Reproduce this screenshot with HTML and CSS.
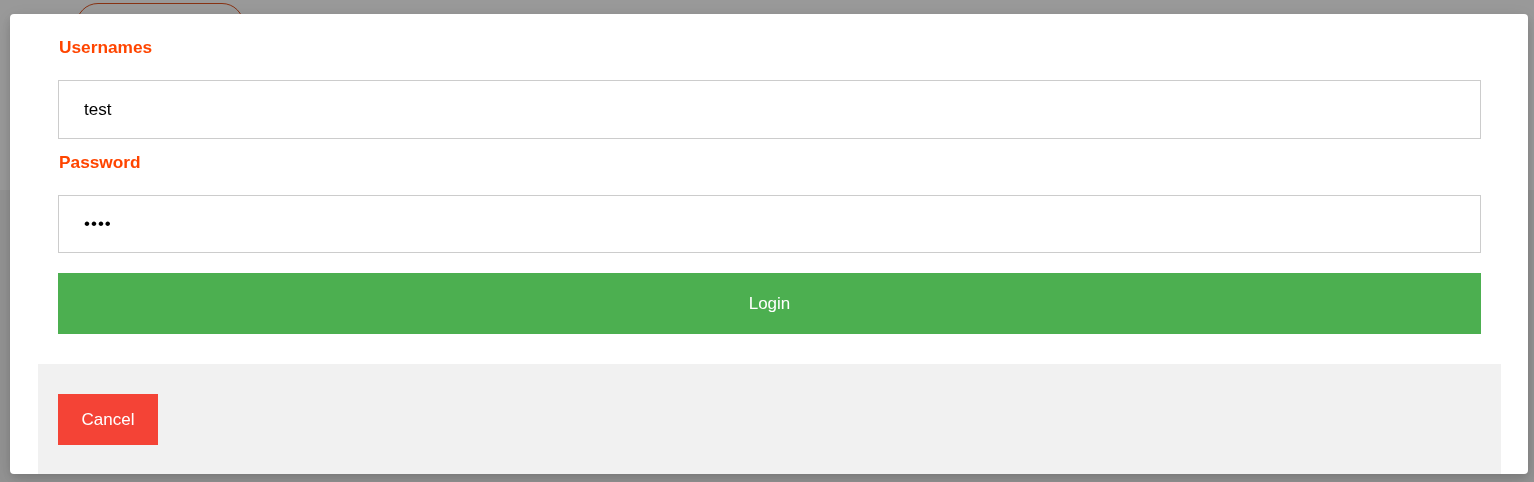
FILE: index.html
```html
<!DOCTYPE html>
<html lang="en">
<head>
<meta charset="utf-8">
<title>Login</title>
<link rel="stylesheet" href="styles.css">
</head>
<body>
<div class="page">
  <div class="page-header">
    <button class="pill-btn" type="button">Login</button>
  </div>
  <div class="page-body"></div>
</div>
<div class="overlay">
  <div class="modal">
    <form class="modal-form">
      <label class="field-label" for="uname">Usernames</label>
      <input class="field-input field-input--first" id="uname" type="text" value="test">
      <label class="field-label field-label--second" for="psw">Password</label>
      <input class="field-input field-input--second" id="psw" type="password" value="test">
      <button class="login-btn" type="button">Login</button>
    </form>
    <div class="modal-footer">
      <button class="cancel-btn" type="button">Cancel</button>
    </div>
  </div>
</div>
</body>
</html>
```
FILE: styles.css
```css
html, body {
  margin: 0;
  padding: 0;
  height: 100%;
  font-family: "Liberation Sans", Arial, sans-serif;
  font-size: 17px;
}

.page {
  height: 100%;
  display: flex;
  flex-direction: column;
}

.page-header {
  height: 190px;
  background: #ffffff;
  padding: 3px 0 0 76px;
  box-sizing: border-box;
}

.pill-btn {
  width: 168px;
  height: 44px;
  border: 1px solid #e25420;
  border-radius: 30px;
  background: #ffffff;
  color: #e25420;
  font-family: inherit;
  font-size: 17px;
}

.page-body {
  flex: 1;
  background: #f4f4f4;
}

.overlay {
  position: fixed;
  inset: 0;
  background: rgba(0, 0, 0, 0.4);
  padding-top: 14px;
  box-sizing: border-box;
}

.modal {
  margin-left: 10px;
  width: 1518px;
  background: #ffffff;
  border-radius: 4px;
  box-shadow: 0 4px 10px 0 rgba(0, 0, 0, 0.12), 0 4px 20px 0 rgba(0, 0, 0, 0.1);
  overflow: hidden;
}

.modal-form {
  display: flex;
  flex-direction: column;
  padding: 24px 47px 30px 48px;
}

.field-label {
  display: block;
  font-weight: bold;
  font-size: 17.3px;
  color: #ff4500;
  line-height: 18px;
  height: 18px;
  padding-left: 1px;
}

.field-label--second {
  margin-top: 14px;
}

.field-input {
  display: block;
  box-sizing: border-box;
  width: 100%;
  margin: 24px 0 0 0;
  padding: 0 25px;
  border: 1px solid #cccccc;
  font-family: "Liberation Sans", Arial, sans-serif;
  font-size: 17px;
  color: #000000;
  background: #ffffff;
  outline: none;
}

.field-input--first {
  height: 59px;
}

.field-input--second {
  height: 58px;
  letter-spacing: 1px;
}

.login-btn {
  margin-top: 20px;
  height: 61px;
  width: 100%;
  border: none;
  background: #4caf50;
  color: #ffffff;
  font-family: "Liberation Sans", Arial, sans-serif;
  font-size: 17px;
  padding: 0;
}

.modal-footer {
  margin: 0 27px 0 28px;
  background: #f1f1f1;
  padding: 30px 20px 29px 20px;
}

.cancel-btn {
  display: block;
  width: 100px;
  height: 51px;
  border: none;
  background: #f44336;
  color: #ffffff;
  font-family: "Liberation Sans", Arial, sans-serif;
  font-size: 17px;
  padding: 0;
}
```
